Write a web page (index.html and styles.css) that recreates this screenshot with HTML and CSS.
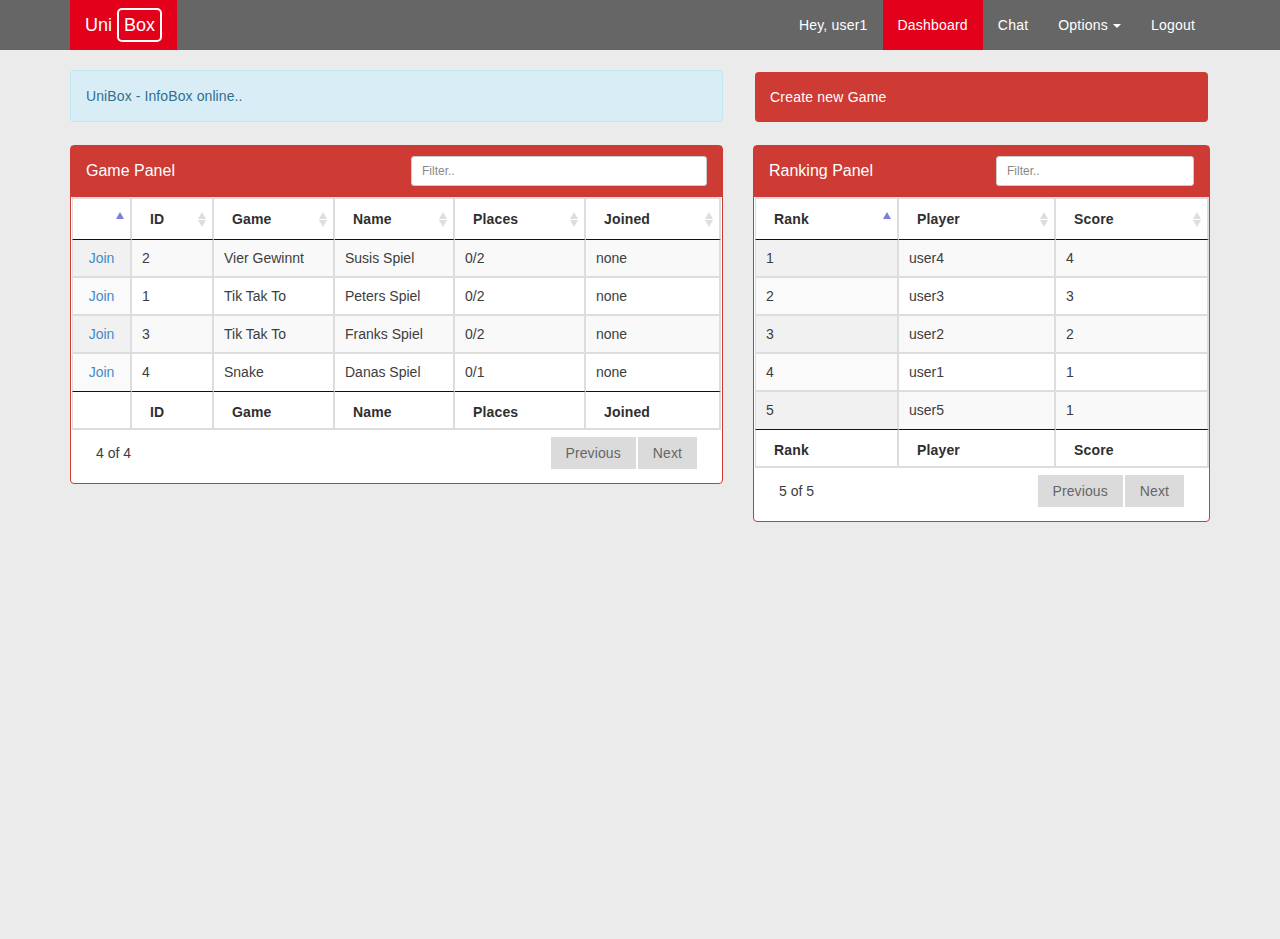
FILE: index.html
```html
<!DOCTYPE html>
<html>
<head>
    <title>UniBox</title>
    <link rel="stylesheet" href="styles.css">
</head>
<body>
    <nav class="navbar">
        <div class="container navbar-inner">
            <a class="brand" href="#">Uni <span class="brand-box">Box</span></a>
            <ul class="nav">
                <li><a href="#">Hey, user1</a></li>
                <li class="active"><a href="#">Dashboard</a></li>
                <li><a href="#">Chat</a></li>
                <li><a href="#">Options <span class="caret"></span></a></li>
                <li><a href="#">Logout</a></li>
            </ul>
        </div>
    </nav>

    <div class="container">
        <div class="row top-row">
            <div class="col-left">
                <div class="alert">UniBox - InfoBox online..</div>
            </div>
            <div class="col-right">
                <a class="create-btn" href="#">Create new Game</a>
            </div>
        </div>

        <div class="row">
            <div class="col-left">
                <div class="panel">
                    <div class="panel-heading">
                        <span class="panel-title">Game Panel</span>
                        <input class="filter filter-game" type="text" placeholder="Filter..">
                    </div>
                    <table class="data-table game-table">
                        <colgroup>
                            <col class="g1"><col class="g2"><col class="g3"><col class="g4"><col class="g5"><col class="g6">
                        </colgroup>
                        <thead>
                            <tr>
                                <th class="sort-asc"></th>
                                <th class="sort">ID</th>
                                <th class="sort">Game</th>
                                <th class="sort">Name</th>
                                <th class="sort">Places</th>
                                <th class="sort">Joined</th>
                            </tr>
                        </thead>
                        <tbody>
                            <tr><td class="sorted join"><a href="#">Join</a></td><td>2</td><td>Vier Gewinnt</td><td>Susis Spiel</td><td>0/2</td><td>none</td></tr>
                            <tr><td class="sorted join"><a href="#">Join</a></td><td>1</td><td>Tik Tak To</td><td>Peters Spiel</td><td>0/2</td><td>none</td></tr>
                            <tr><td class="sorted join"><a href="#">Join</a></td><td>3</td><td>Tik Tak To</td><td>Franks Spiel</td><td>0/2</td><td>none</td></tr>
                            <tr><td class="sorted join"><a href="#">Join</a></td><td>4</td><td>Snake</td><td>Danas Spiel</td><td>0/1</td><td>none</td></tr>
                        </tbody>
                        <tfoot>
                            <tr><th></th><th>ID</th><th>Game</th><th>Name</th><th>Places</th><th>Joined</th></tr>
                        </tfoot>
                    </table>
                    <div class="table-footer">
                        <span class="info">4 of 4</span>
                        <div class="pager">
                            <a class="page-btn" href="#">Previous</a>
                            <a class="page-btn" href="#">Next</a>
                        </div>
                    </div>
                </div>
            </div>

            <div class="col-right">
                <div class="panel">
                    <div class="panel-heading">
                        <span class="panel-title">Ranking Panel</span>
                        <input class="filter filter-rank" type="text" placeholder="Filter..">
                    </div>
                    <table class="data-table rank-table">
                        <colgroup>
                            <col class="r1"><col class="r2"><col class="r3">
                        </colgroup>
                        <thead>
                            <tr>
                                <th class="sort-asc">Rank</th>
                                <th class="sort">Player</th>
                                <th class="sort">Score</th>
                            </tr>
                        </thead>
                        <tbody>
                            <tr><td class="sorted">1</td><td>user4</td><td>4</td></tr>
                            <tr><td class="sorted">2</td><td>user3</td><td>3</td></tr>
                            <tr><td class="sorted">3</td><td>user2</td><td>2</td></tr>
                            <tr><td class="sorted">4</td><td>user1</td><td>1</td></tr>
                            <tr><td class="sorted">5</td><td>user5</td><td>1</td></tr>
                        </tbody>
                        <tfoot>
                            <tr><th>Rank</th><th>Player</th><th>Score</th></tr>
                        </tfoot>
                    </table>
                    <div class="table-footer">
                        <span class="info">5 of 5</span>
                        <div class="pager">
                            <a class="page-btn" href="#">Previous</a>
                            <a class="page-btn" href="#">Next</a>
                        </div>
                    </div>
                </div>
            </div>
        </div>
    </div>
</body>
</html>
```

FILE: styles.css
```css
* {
    box-sizing: border-box;
}

body {
    margin: 0;
    background-color: #ebebeb;
    color: #3d3d3d;
    font-family: "Liberation Sans", Arial, sans-serif;
    font-size: 14px;
    line-height: 20px;
}

a {
    text-decoration: none;
}

.container {
    width: 1170px;
    margin: 0 auto;
    padding: 0 15px;
}

/* navbar */
.navbar {
    height: 50px;
    background-color: #666;
}

.navbar-inner {
    display: flex;
    justify-content: space-between;
}

.brand {
    display: flex;
    align-items: center;
    gap: 5px;
    height: 50px;
    padding: 0 15px;
    background-color: #e2001a;
    color: #fff;
    font-size: 18px;
}

.brand-box {
    padding: 5px;
    border: 2px solid #fff;
    border-radius: 5px;
    line-height: 20px;
}

.nav {
    display: flex;
    margin: 0;
    padding: 0;
    list-style: none;
}

.nav a {
    display: block;
    padding: 15px;
    color: #fff;
    letter-spacing: 0.2px;
}

.nav .active a {
    background-color: #e2001a;
}

.caret {
    display: inline-block;
    margin-left: 1px;
    vertical-align: middle;
    border-top: 4px solid #fff;
    border-left: 4px solid transparent;
    border-right: 4px solid transparent;
}

/* grid */
.row {
    display: flex;
    margin: 0 -15px;
    align-items: flex-start;
}

.top-row {
    margin-top: 20px;
    margin-bottom: 23px;
}

.col-left {
    width: 683px;
    padding: 0 15px;
}

.col-right {
    width: 487px;
    padding: 0 15px;
}

.alert {
    padding: 15px;
    background-color: #d9edf7;
    border: 1px solid #bce8f1;
    border-radius: 4px;
    color: #31708f;
    letter-spacing: 0.1px;
}

.create-btn {
    display: block;
    margin: 2px 2px 0;
    padding: 15px;
    background-color: #ce3a34;
    border-radius: 4px;
    color: #fff;
    letter-spacing: 0.2px;
}

/* panels */
.panel {
    background-color: #fff;
    border: 1px solid #ce3a34;
    border-radius: 4px;
}

.panel-heading {
    display: flex;
    justify-content: space-between;
    align-items: center;
    height: 51px;
    padding: 0 15px 1px;
    background-color: #ce3a34;
    color: #fff;
}

.panel-title {
    font-size: 16px;
}

.filter {
    height: 30px;
    padding: 5px 10px;
    background-color: #fff;
    border: 1px solid #ccc;
    border-radius: 3px;
    font-family: inherit;
    font-size: 12px;
}

.filter::placeholder {
    color: #888;
}

.filter-game {
    width: 296px;
}

.filter-rank {
    width: 198px;
}

/* tables */
.data-table {
    margin-left: 1px;
    table-layout: fixed;
    border-collapse: separate;
    border-spacing: 0;
}

.game-table {
    width: 649px;
}

.rank-table {
    width: 454px;
}

.g1 { width: 60px; }
.g2 { width: 82px; }
.g3 { width: 121px; }
.g4 { width: 120px; }
.g5 { width: 131px; }
.g6 { width: 135px; }

.r1 { width: 144px; }
.r2 { width: 157px; }
.r3 { width: 153px; }

.data-table th,
.data-table td {
    border-right: 2px solid #ddd;
    border-bottom: 2px solid #ddd;
    text-align: left;
}

.data-table th:first-child,
.data-table td:first-child {
    border-left: 1px solid #ddd;
}

.data-table th {
    position: relative;
    padding: 10px 18px 6px;
    color: #2f2f2f;
    letter-spacing: 0.15px;
}

.data-table thead th {
    padding: 10px 18px;
    border-top: 2px solid #ddd;
    border-bottom: 1px solid #111;
}

.data-table tfoot th {
    border-top: 1px solid #111;
}

.data-table td {
    padding: 8px 10px;
}

.data-table tbody tr:last-child td {
    padding-bottom: 9px;
    border-bottom: 0;
}

.data-table tbody tr:nth-child(odd) td {
    background-color: #f9f9f9;
}

.data-table tbody tr:nth-child(odd) td.sorted {
    background-color: #f1f1f1;
}

.data-table tbody tr:nth-child(even) td.sorted {
    background-color: #fafafa;
}

.data-table td.join {
    padding-left: 15px;
    padding-right: 15px;
    text-align: center;
}

.join a {
    color: #428bca;
}

/* sort arrows */
.sort::before,
.sort::after,
.sort-asc::before {
    content: "";
    position: absolute;
    right: 6px;
    border-left: 4px solid transparent;
    border-right: 4px solid transparent;
}

.sort::before {
    top: 13px;
    border-bottom: 7px solid #ddd;
}

.sort::after {
    top: 21px;
    border-top: 7px solid #ddd;
}

.sort-asc::before {
    top: 13px;
    border-bottom: 7px solid #7c7fdc;
}

/* footer under table */
.table-footer {
    display: flex;
    justify-content: space-between;
    align-items: center;
    padding: 7px 25px 14px;
}

.pager {
    display: flex;
    gap: 2px;
}

.page-btn {
    padding: 6px 15px;
    background-color: #dbdbdb;
    color: #666;
    letter-spacing: 0.1px;
}
```
